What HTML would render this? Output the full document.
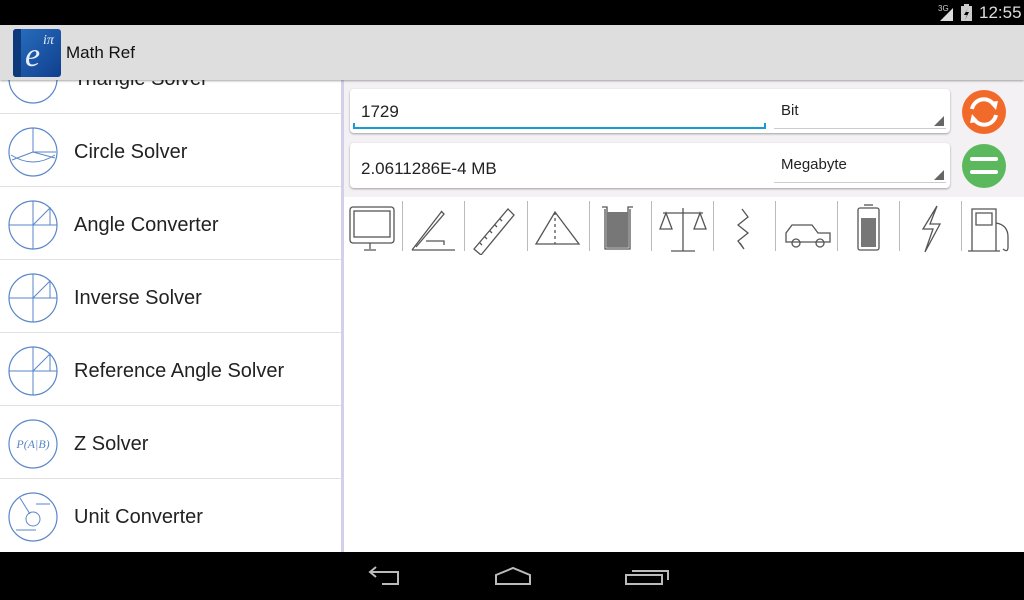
<!DOCTYPE html>
<html><head><meta charset="utf-8"><style>
*{margin:0;padding:0;box-sizing:border-box}
html,body{width:1024px;height:600px;overflow:hidden}
body{position:relative;background:#fff;font-family:"Liberation Sans",sans-serif}
.abs{position:absolute}
#status{left:0;top:0;width:1024px;height:25px;background:#000}
#bar{left:0;top:25px;width:1024px;height:55px;background:#dedede;box-shadow:0 1px 2px rgba(0,0,0,.35);z-index:5}
#nav{left:0;top:552px;width:1024px;height:48px;background:#000}
#left{left:0;top:80px;width:341px;height:472px;background:#fff;overflow:hidden}
.row{position:absolute;left:0;width:341px;height:73px;border-bottom:1px solid #e2e2e2}
.row span{position:absolute;left:74px;top:27px;font-size:20px;color:#222}
.row svg{position:absolute;left:6px;top:11px}
#divider{left:341px;top:80px;width:3px;height:472px;background:#d4d0ec}
#top{left:344px;top:80px;width:680px;height:117px;background:#f4f1f4}
.card{position:absolute;left:350px;width:600px;background:#fff;border-radius:4px;box-shadow:0 1px 2px rgba(0,0,0,.35)}
.spin{position:absolute;border-bottom:1px solid #ccc;width:172px;left:424px;font-size:15px;color:#222}
.tri{position:absolute;right:2px;bottom:2px;width:0;height:0;border-left:10px solid transparent;border-bottom:10px solid #666}
.sep{position:absolute;top:201px;width:1px;height:50px;background:#bbb}
</style></head><body>
<div id="status" class="abs">
<span class="abs" style="left:938px;top:4px;color:#ccc;font-size:8px">3G</span>
<svg class="abs" style="left:940px;top:7px" width="14" height="14"><path d="M0 14 L13 14 L13 1 Z" fill="#ddd"/></svg>
<svg class="abs" style="left:961px;top:4px" width="11" height="17"><rect x="3" y="0" width="5" height="2" fill="#ccc"/><rect x="0" y="2" width="11" height="15" fill="#ccc"/><path d="M7 4 L3 11 L6 11 L4 16 L8 8 L5 8 Z" fill="#000"/></svg>
<span class="abs" style="left:979px;top:3px;color:#ddd;font-size:17px">12:55</span>
</div>
<div id="bar" class="abs">
<div class="abs" style="left:13px;top:4px;width:48px;height:48px;border-radius:3px;background:linear-gradient(135deg,#2a6fc0,#0f3f8e)"><div class="abs" style="left:0;top:0;width:8px;height:48px;background:#0c3a7a;border-radius:3px 0 0 3px"></div><span class="abs" style="left:12px;top:8px;color:#e8eef8;font-family:'Liberation Serif',serif;font-style:italic;font-size:34px">e</span><span class="abs" style="left:30px;top:4px;color:#e8eef8;font-family:'Liberation Serif',serif;font-style:italic;font-size:14px">iπ</span></div>
<span class="abs" style="left:66px;top:18px;font-size:17px;color:#111">Math Ref</span>
</div>
<div id="left" class="abs">
<div class="row" style="top:-39px"><svg width="54" height="54"><circle cx="27" cy="27" r="24" fill="none" stroke="#5a86c8" stroke-width="1.2"/><path d="M5 22 L49 22" stroke="#5a86c8" fill="none"/></svg><span>Triangle Solver</span></div>
<div class="row" style="top:34px"><svg width="54" height="54"><circle cx="27" cy="27" r="24" fill="none" stroke="#5a86c8" stroke-width="1.2"/><path d="M27 3 V27 L49 33 M27 27 L6 35 M27 27 H50 M5 30 Q27 44 49 30" stroke="#5a86c8" fill="none"/></svg><span>Circle Solver</span></div>
<div class="row" style="top:107px"><svg width="54" height="54"><circle cx="27" cy="27" r="24" fill="none" stroke="#5a86c8" stroke-width="1.2"/><path d="M3 27 H51 M27 3 V51 M27 27 L44 10 V27" stroke="#5a86c8" fill="none"/></svg><span>Angle Converter</span></div>
<div class="row" style="top:180px"><svg width="54" height="54"><circle cx="27" cy="27" r="24" fill="none" stroke="#5a86c8" stroke-width="1.2"/><path d="M3 27 H51 M27 3 V51 M27 27 L44 10 V27" stroke="#5a86c8" fill="none"/></svg><span>Inverse Solver</span></div>
<div class="row" style="top:253px"><svg width="54" height="54"><circle cx="27" cy="27" r="24" fill="none" stroke="#5a86c8" stroke-width="1.2"/><path d="M3 27 H51 M27 3 V51 M27 27 L44 10 V27" stroke="#5a86c8" fill="none"/></svg><span>Reference Angle Solver</span></div>
<div class="row" style="top:326px"><svg width="54" height="54"><circle cx="27" cy="27" r="24" fill="none" stroke="#5a86c8" stroke-width="1.2"/><text x="27" y="31" text-anchor="middle" font-family="Liberation Serif" font-style="italic" font-size="12" fill="#5a86c8">P(A|B)</text></svg><span>Z Solver</span></div>
<div class="row" style="top:399px;border:none"><svg width="54" height="54"><circle cx="27" cy="27" r="24" fill="none" stroke="#5a86c8" stroke-width="1.2"/><circle cx="27" cy="29" r="7" fill="none" stroke="#5a86c8"/><path d="M14 8 L24 24 M30 14 H44 M10 40 H30" stroke="#5a86c8" fill="none"/></svg><span>Unit Converter</span></div>
</div>
<div id="divider" class="abs"></div>
<div id="top" class="abs"></div>
<div class="card" style="top:89px;height:44px"><span class="abs" style="left:11px;top:13px;font-size:17px;color:#222">1729</span><div class="abs" style="left:3px;top:38px;width:413px;height:2px;background:#1a9cd0"></div><div class="abs" style="left:3px;top:34px;width:2px;height:6px;background:#1a9cd0"></div><div class="abs" style="left:414px;top:34px;width:2px;height:6px;background:#1a9cd0"></div></div>
<div class="spin" style="top:100px;height:29px;left:774px"><span style="position:absolute;left:7px;top:2px">Bit</span><div class="tri"></div></div>
<div class="card" style="top:143px;height:45px"><span class="abs" style="left:11px;top:16px;font-size:17px;color:#222">2.0611286E-4 MB</span></div>
<div class="spin" style="top:153px;height:30px;left:774px"><span style="position:absolute;left:7px;top:3px">Megabyte</span><div class="tri"></div></div>
<svg class="abs" style="left:961px;top:89px" width="46" height="46"><circle cx="23" cy="23" r="22" fill="#f26a2a"/><path d="M11 20 A12 12 0 0 1 33 16" stroke="#fff" stroke-width="4" fill="none"/><path d="M35 26 A12 12 0 0 1 13 30" stroke="#fff" stroke-width="4" fill="none"/><path d="M28 13 L37 12 L35 21 Z M18 33 L9 34 L11 25 Z" fill="#fff"/></svg>
<svg class="abs" style="left:961px;top:143px" width="46" height="46"><circle cx="23" cy="23" r="22" fill="#5cb85c"/><rect x="9" y="14" width="28" height="4" rx="2" fill="#fff"/><rect x="9" y="27" width="28" height="4" rx="2" fill="#fff"/></svg>
<div class="sep" style="left:402px"></div><div class="sep" style="left:464px"></div><div class="sep" style="left:527px"></div><div class="sep" style="left:589px"></div><div class="sep" style="left:651px"></div><div class="sep" style="left:713px"></div><div class="sep" style="left:775px"></div><div class="sep" style="left:837px"></div><div class="sep" style="left:899px"></div><div class="sep" style="left:961px"></div>
<svg class="abs" style="left:340px;top:197px" width="684" height="58" fill="none" stroke="#555" stroke-width="1.3">
<rect x="10" y="10" width="44" height="36" rx="3"/><rect x="14" y="14" width="36" height="26"/><path d="M30 46 V52 M24 53 H36"/>
<path d="M72 53 L102 14 M72 53 H115 M86 44 H104 V48 M76 50 L104 17 L101 14"/>
<path d="M134 52 L168 12 L174 18 L141 58 Z M140 46 l2 2 M145 40 l2 2 M150 34 l2 2 M155 28 l2 2 M160 22 l2 2"/>
<path d="M196 47 L215 15 L239 47 Z"/><path d="M215 15 V47" stroke-dasharray="3 3"/>
<path d="M262 10 H267 V50 H288 V10 H293 M265 12 V52 H290 V12"/><rect x="267" y="15" width="21" height="35" fill="#777" stroke="none"/>
<path d="M343 11 V54 M331 54 H355 M323 16 H363 M326 16 L320 32 H332 Z M360 16 L354 32 H366 Z"/>
<path d="M402 12 L408 20 L398 28 L408 36 L398 44 L404 52 L400 46"/>
<path d="M446 45 V36 L452 28 H472 L478 36 H490 V45 Z"/><circle cx="456" cy="46" r="4"/><circle cx="480" cy="46" r="4"/>
<rect x="518" y="11" width="21" height="42" rx="2"/><rect x="521" y="21" width="15" height="29" fill="#777" stroke="none"/><path d="M524 8 H533"/>
<path d="M597 9 L583 32 H593 L585 55 L600 27 H590 L597 9"/>
<path d="M632 54 V12 H656 V54 M628 54 H660 M636 16 H652 V28 H636 Z M656 26 Q668 28 668 40 V50 Q668 56 663 52"/>
</svg>
<div id="nav" class="abs">
<svg class="abs" style="left:360px;top:8px" width="320" height="30" fill="none" stroke="#bbb" stroke-width="2">
<path d="M16 7 L10 12 L16 17 M10 12 H38 V24 H22"/>
<path d="M136 15 L153 8 L170 15 V24 H136 Z"/>
<path d="M266 15 H302 V24 H266 Z M272 11 H308 V20"/>
</svg>
</div>
</body></html>
